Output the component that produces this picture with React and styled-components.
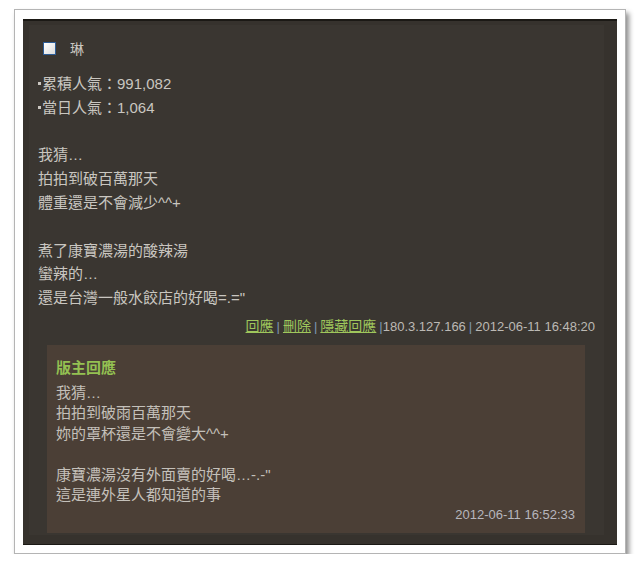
import React from "react";
import styled, { createGlobalStyle } from "styled-components";

const GlobalStyle = createGlobalStyle`
  body {
    margin: 0;
    background: #ffffff;
    font-family: "Liberation Sans", "Noto Sans CJK TC", sans-serif;
  }
`;

const Frame = styled.div`
  box-sizing: border-box;
  margin: 9px 0 0 14px;
  width: 612px;
  height: 545px;
  padding: 9px 8px 8px 8px;
  background: #ffffff;
  border: 1px solid #b4b4b4;
  box-shadow: 3px 4px 5px rgba(0, 0, 0, 0.45);
`;

const Panel = styled.div`
  box-sizing: border-box;
  height: 100%;
  padding: 4px 13px 9px 6px;
  background: #36322d;
  border-top: 2px solid #1b1915;
  border-bottom: 1px solid #1b1915;
`;

const Inner = styled.div`
  box-sizing: border-box;
  height: 100%;
  padding: 16px 9px 0 9px;
  background: #3a3631;
`;

const Header = styled.div`
  display: flex;
  align-items: center;
  height: 14px;
  padding-left: 5px;
  gap: 14px;
  color: #c9c6c0;
  font-size: 14px;
`;

const Check = styled.span`
  box-sizing: border-box;
  width: 13px;
  height: 13px;
  border: 1.5px solid #2c5c96;
  background: linear-gradient(135deg, #ffffff 0%, #dcdcdc 100%);
`;

const Body = styled.div`
  margin-top: 17px;
  font-size: 15px;
  line-height: 23.8px;
  color: #c9c6c0;
`;

const Line = styled.div`
  white-space: nowrap;
  min-height: ${(p) => p.$lh || "23.8px"};
`;

const Bullet = styled.span`
  display: inline-block;
  width: 3px;
  height: 3px;
  margin: 0 1px 0 0;
  vertical-align: 4px;
  background: #c9c6c0;
`;

const Footer = styled.div`
  margin-top: 6px;
  text-align: right;
  font-size: 13px;
  line-height: 20px;
  color: #bcb9b4;
  white-space: nowrap;
`;

const Link = styled.a`
  color: #9fc65c;
  text-decoration: underline;
  font-size: 14px;
`;

const Sep = styled.span`
  color: #7f97b3;
  margin-left: 3px;
  margin-right: ${(p) => (p.$tight ? "0" : "3px")};
`;

const Reply = styled.div`
  box-sizing: border-box;
  margin: 8px 10px 0 9px;
  height: 188px;
  padding: 13px 10px 9px 9px;
  background: #4b3f36;
`;

const ReplyTitle = styled.div`
  font-size: 15px;
  font-weight: bold;
  line-height: 20px;
  color: #94c152;
`;

const ReplyText = styled.div`
  margin-top: 4.75px;
  font-size: 15px;
  line-height: 20.5px;
  color: #c4c0ba;
`;

const ReplyDate = styled.div`
  text-align: right;
  font-size: 13px;
  line-height: 18px;
  color: #b7b6bd;
`;

const bodyLines = [
  "",
  "我猜…",
  "拍拍到破百萬那天",
  "體重還是不會減少^^+",
  "",
  "煮了康寶濃湯的酸辣湯",
  "蠻辣的…",
  "還是台灣一般水餃店的好喝=.=\"",
];

const replyLines = [
  "我猜…",
  "拍拍到破雨百萬那天",
  "妳的罩杯還是不會變大^^+",
  "",
  "康寶濃湯沒有外面賣的好喝…-.-\"",
  "這是連外星人都知道的事",
];

function App() {
  return (
    <>
      <GlobalStyle />
      <Frame>
        <Panel>
          <Inner>
            <Header>
              <Check />
              <span>琳</span>
            </Header>
            <Body>
              <Line><Bullet />累積人氣：991,082</Line>
              <Line><Bullet />當日人氣：1,064</Line>
              {bodyLines.map((t, i) => (
                <Line key={i}>{t}</Line>
              ))}
            </Body>
            <Footer>
              <Link>回應</Link>
              <Sep>|</Sep>
              <Link>刪除</Link>
              <Sep>|</Sep>
              <Link>隱藏回應</Link>
              <Sep $tight>|</Sep>180.3.127.166
              <Sep>|</Sep>2012-06-11 16:48:20
            </Footer>
            <Reply>
              <ReplyTitle>版主回應</ReplyTitle>
              <ReplyText>
                {replyLines.map((t, i) => (
                  <Line key={i} $lh="20.5px">{t}</Line>
                ))}
              </ReplyText>
              <ReplyDate>2012-06-11 16:52:33</ReplyDate>
            </Reply>
          </Inner>
        </Panel>
      </Frame>
    </>
  );
}

export default App;
